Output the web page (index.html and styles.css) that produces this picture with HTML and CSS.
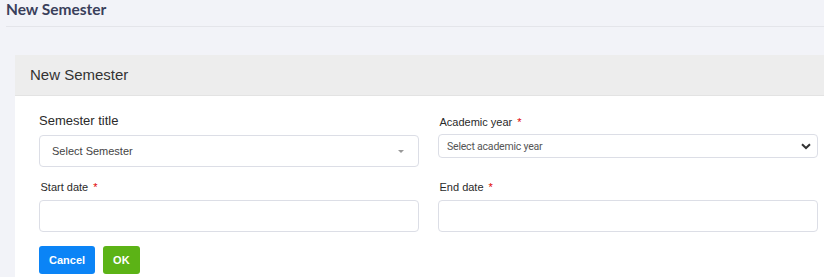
FILE: index.html
```html
<!DOCTYPE html>
<html lang="en">
<head>
<meta charset="utf-8">
<title>New Semester</title>
<link rel="stylesheet" href="styles.css">
</head>
<body>
  <div class="page-header">
    <h1 class="page-title">New Semester</h1>
  </div>
  <div class="content">
    <div class="card">
      <div class="card-header">New Semester</div>
      <div class="card-body">
        <div class="row row-first">
          <div class="field">
            <label class="label label-lg">Semester title</label>
            <div class="control select2">
              <span class="placeholder">Select Semester</span>
              <span class="caret"></span>
            </div>
          </div>
          <div class="field field-offset">
            <label class="label">Academic year <span class="req">*</span></label>
            <div class="control select-sm">
              <span class="placeholder-sm">Select academic year</span>
              <svg class="chevron" width="10" height="7" viewBox="0 0 10 7"><path d="M1 1.2 L5 5 L9 1.2" fill="none" stroke="#333" stroke-width="2"/></svg>
            </div>
          </div>
        </div>
        <div class="row row-second">
          <div class="field">
            <label class="label">Start date <span class="req">*</span></label>
            <div class="control input"></div>
          </div>
          <div class="field">
            <label class="label">End date <span class="req">*</span></label>
            <div class="control input"></div>
          </div>
        </div>
        <div class="actions">
          <button class="btn btn-cancel">Cancel</button>
          <button class="btn btn-ok">OK</button>
        </div>
      </div>
    </div>
  </div>
</body>
</html>
```
FILE: styles.css
```css
html, body {
  margin: 0;
  padding: 0;
}
body {
  background: #f2f3f8;
  overflow: hidden;
  width: 824px;
  height: 277px;
  font-family: "Liberation Sans", Arial, sans-serif;
}
.page-header {
  margin-left: 6px;
  height: 26px;
  border-bottom: 1px solid #e4e5ea;
}
.page-title {
  margin: 0;
  font-family: Lato, "Liberation Sans", sans-serif;
  font-weight: 700;
  font-size: 15.5px;
  line-height: 18px;
  color: #3a3f5b;
}
.content {
  padding: 28px 0 0 15px;
}
.card {
  width: 840px;
  background: #fff;
}
.card-header {
  height: 41px;
  box-sizing: border-box;
  padding-left: 15px;
  background: #ededed;
  border-bottom: 1px solid #e3e3e3;
  font-size: 15px;
  line-height: 40px;
  color: #333;
}
.card-body {
  padding: 16px 0 4px 24px;
}
.row {
  display: grid;
  grid-template-columns: 380px 380px;
  column-gap: 19px;
  align-items: start;
}
.row-second {
  margin-top: 13px;
}
.field {
  display: flex;
  flex-direction: column;
}
.field-offset {
  padding-top: 3px;
}
.label {
  font-size: 11px;
  line-height: 15px;
  color: #2a2a2a;
  margin-bottom: 5px;
  padding-left: 1.5px;
}
.label-lg {
  font-size: 13px;
  line-height: 17px;
  margin-bottom: 6px;
  padding-left: 0;
}
.row-first .field-offset .label {
  margin-bottom: 4px;
}
.req {
  color: #e10000;
  margin-left: 2px;
}
.control {
  box-sizing: border-box;
  border: 1px solid #dcdee6;
  border-radius: 4px;
  background: #fff;
  display: flex;
  align-items: center;
}
.select2 {
  height: 32px;
  padding: 0 14px 0 12px;
  justify-content: space-between;
}
.placeholder {
  font-size: 11px;
  color: #444;
}
.caret {
  width: 0;
  height: 0;
  border-style: solid;
  border-width: 3px 3px 0 3px;
  border-color: #999 transparent transparent transparent;
}
.select-sm {
  height: 24px;
  padding: 0 6px 0 8px;
  justify-content: space-between;
}
.placeholder-sm {
  font-family: Roboto, "Liberation Sans", sans-serif;
  font-size: 10.5px;
  color: #555;
  letter-spacing: -0.2px;
}
.chevron {
  display: block;
}
.input {
  height: 32px;
}
.actions {
  margin-top: 14px;
  display: flex;
  gap: 8px;
}
.btn {
  height: 28px;
  border: none;
  border-radius: 3px;
  padding: 0 10px;
  font-family: "Liberation Sans", Arial, sans-serif;
  font-weight: 700;
  font-size: 11px;
  color: #fff;
  cursor: pointer;
}
.btn-cancel {
  background: #0b84f6;
}
.btn-ok {
  background: #5cb316;
}
```
